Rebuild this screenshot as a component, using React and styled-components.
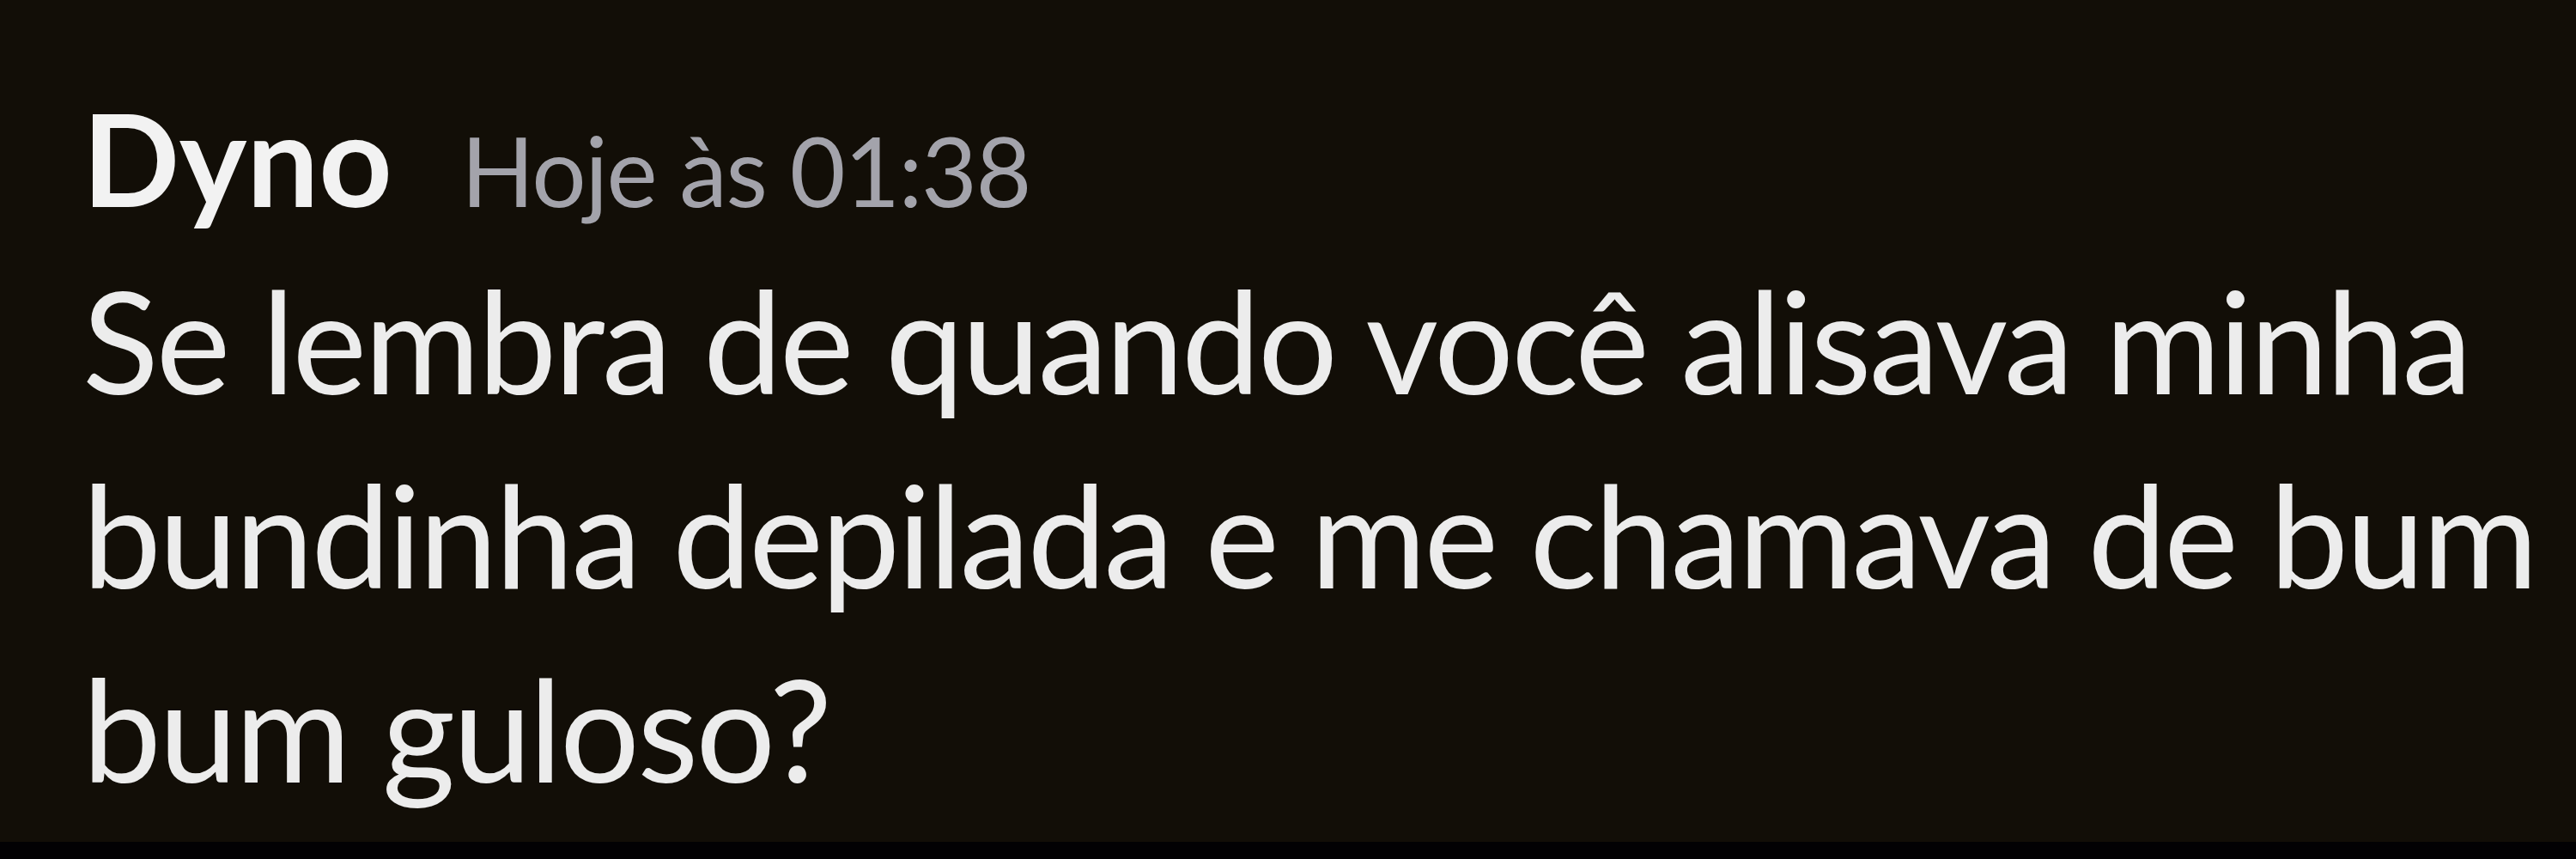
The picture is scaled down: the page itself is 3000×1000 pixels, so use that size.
import React from "react";
import styled, { createGlobalStyle } from "styled-components";

const Global = createGlobalStyle`
  html, body { margin: 0; padding: 0; background: #020103; }
  #root { width: 3000px; }
`;

const Screen = styled.div`
  width: 3000px;
  height: 1000px;
  display: flex;
  flex-direction: column;
  background: #020103;
`;

const Message = styled.div`
  flex: 0 0 980px;
  background: #120e07;
  box-sizing: border-box;
  padding: 84px 0 0 96px;
  display: flex;
  flex-direction: column;
`;

const Header = styled.div`
  display: flex;
  align-items: baseline;
  gap: 80px;
  height: 199px;
  line-height: 200px;
  white-space: nowrap;
`;

const Author = styled.span`
  font-family: Lato, "Noto Sans", sans-serif;
  font-weight: 700;
  font-size: 149px;
  color: #f2f2f2;
`;

const Timestamp = styled.span`
  font-family: Lato, "Noto Sans", sans-serif;
  font-weight: 400;
  font-size: 112px;
  letter-spacing: -1.5px;
  color: #a3a3ab;
`;

const Body = styled.div`
  font-family: Lato, "Noto Sans", sans-serif;
  font-size: 164px;
  letter-spacing: -2.8px;
  line-height: 226px;
  color: #ececec;
  white-space: nowrap;
`;

export default function App() {
  return (
    <>
      <Global />
      <Screen>
        <Message>
          <Header>
            <Author>Dyno</Author>
            <Timestamp>Hoje às 01:38</Timestamp>
          </Header>
          <Body>
            Se lembra de quando você alisava minha
            <br />
            bundinha depilada e me chamava de bum
            <br />
            bum guloso?
          </Body>
        </Message>
      </Screen>
    </>
  );
}
